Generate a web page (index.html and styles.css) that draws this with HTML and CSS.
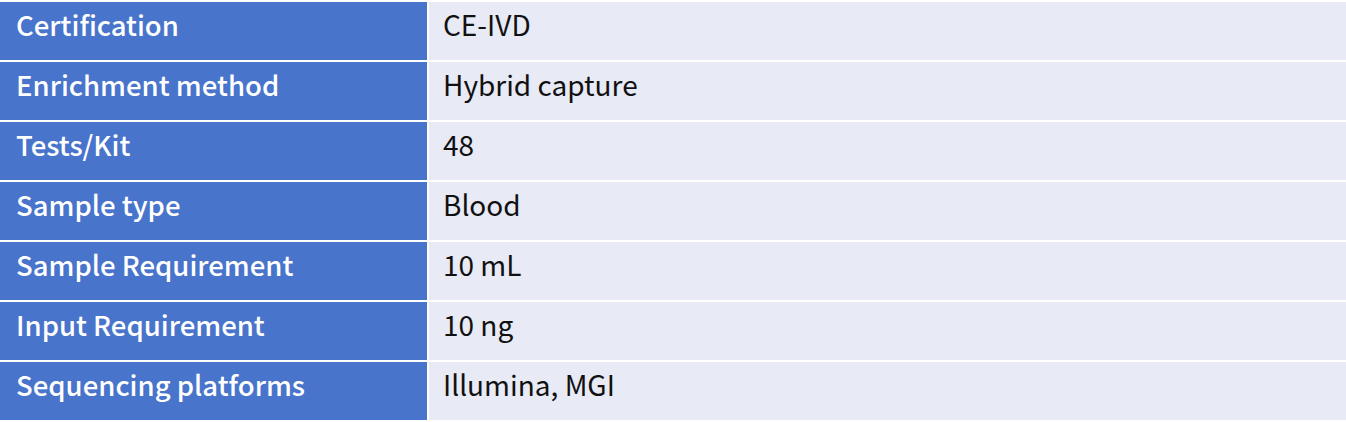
FILE: index.html
```html
<!DOCTYPE html>
<html>
<head>
<meta charset="utf-8">
<link rel="stylesheet" href="styles.css">
</head>
<body>
<table class="spec">
  <tr><th>Certification</th><td>CE-IVD</td></tr>
  <tr><th>Enrichment method</th><td>Hybrid capture</td></tr>
  <tr><th>Tests/Kit</th><td>48</td></tr>
  <tr><th>Sample type</th><td>Blood</td></tr>
  <tr><th>Sample Requirement</th><td>10 mL</td></tr>
  <tr><th>Input Requirement</th><td>10 ng</td></tr>
  <tr><th>Sequencing platforms</th><td>Illumina, MGI</td></tr>
</table>
</body>
</html>
```
FILE: styles.css
```css
html, body {
  margin: 0;
  padding: 0;
  background: #ffffff;
}
body {
  padding-top: 2px;
  font-family: "Noto Sans CJK SC", "Source Sans Pro", sans-serif;
}
.spec {
  border-collapse: separate;
  border-spacing: 0;
  width: 1346px;
  table-layout: fixed;
}
.spec th, .spec td {
  height: 60px;
  box-sizing: border-box;
  vertical-align: top;
  padding: 3px 15px 0 15px;
  font-size: 28px;
  line-height: 38px;
  text-align: left;
  border-bottom: 2px solid #ffffff;
}
.spec th {
  width: 429px;
  background: #4874cb;
  color: #ffffff;
  font-size: 27.5px;
  font-weight: 500;
  border-right: 2px solid #ffffff;
  padding-left: 16px;
}
.spec td {
  background: #e8eaf6;
  color: #111111;
  font-weight: 400;
  padding-left: 14px;
}
```
